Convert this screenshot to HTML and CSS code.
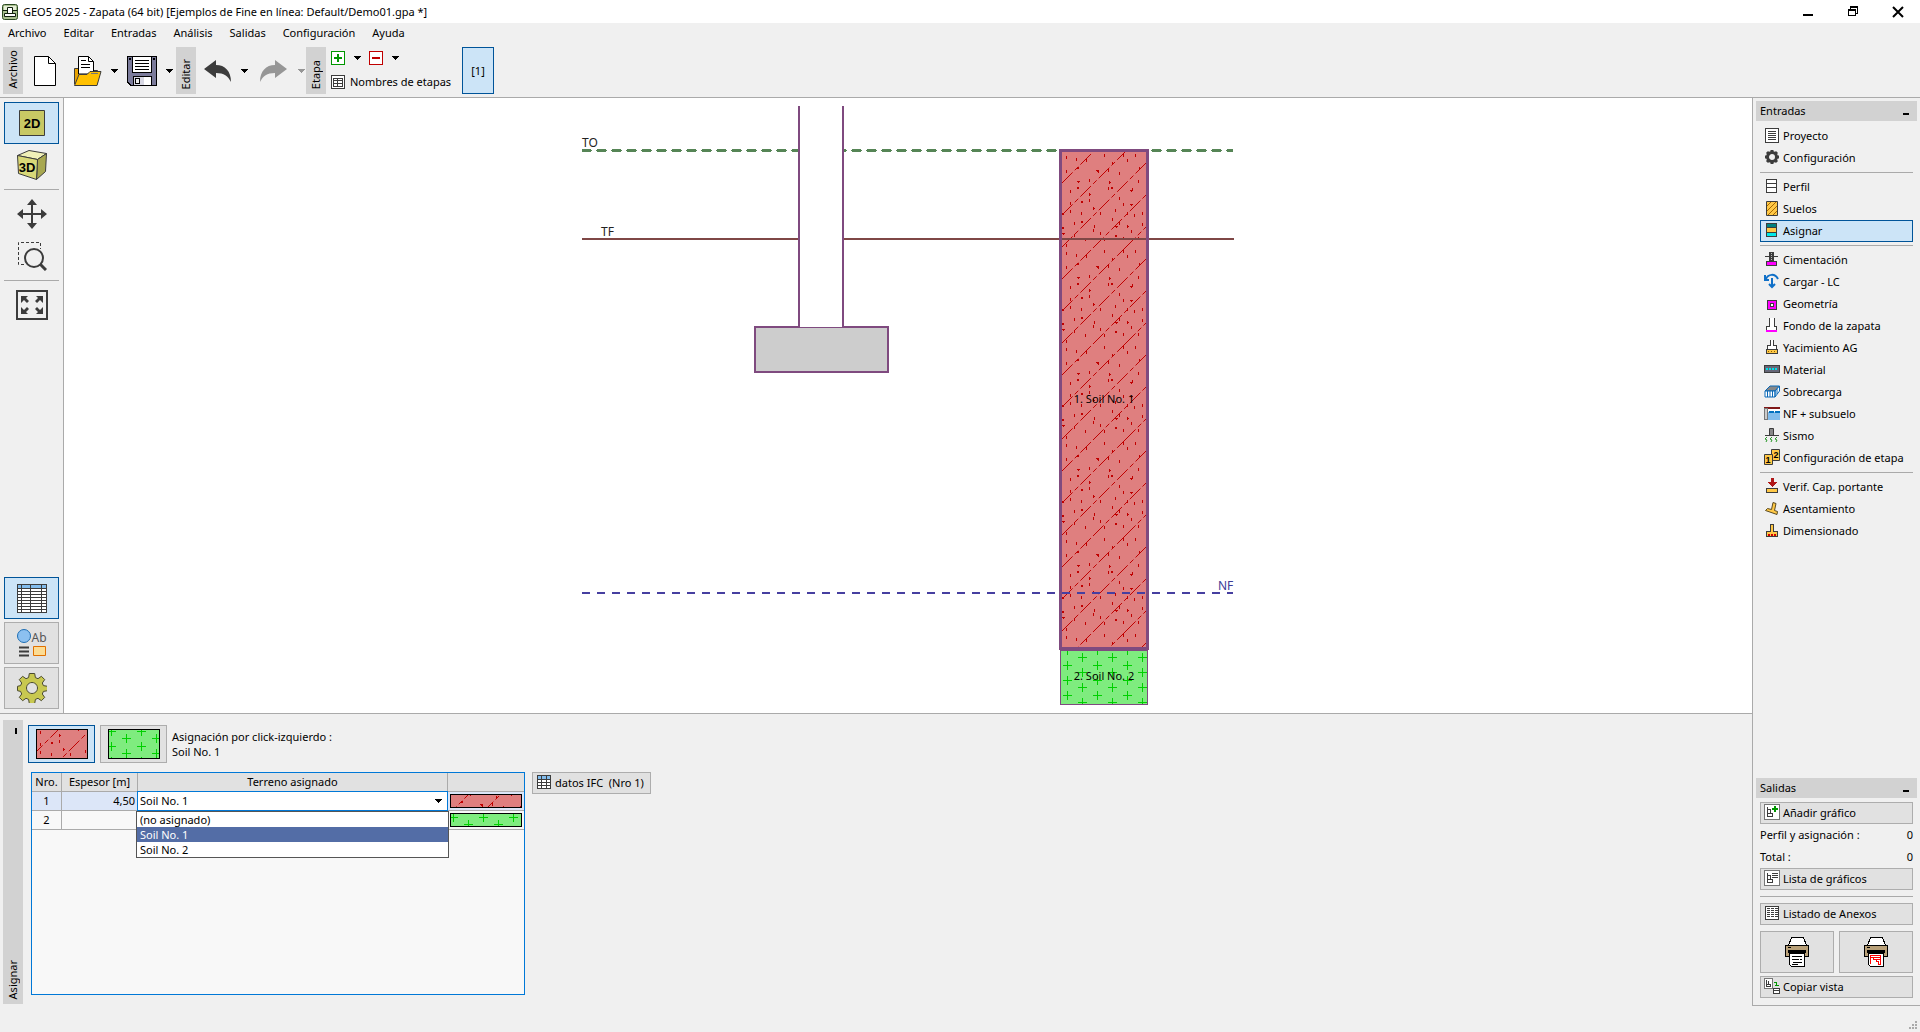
FILE: index.html
```html
<!DOCTYPE html>
<html lang="es">
<head>
<meta charset="utf-8">
<meta name="viewport" content="width=device-width, initial-scale=1">
<title>GEO5 2025 - Zapata</title>
<link rel="stylesheet" href="styles.css">
</head>
<body>
<svg class="defs" width="0" height="0" aria-hidden="true">
  <defs>
    <path id="caret" d="M0 0h7v1H6v1H5v1H4v1H3V3H2V2H1V1H0z"/>
    <pattern id="clay" x="1062" y="152" width="96" height="96" patternUnits="userSpaceOnUse">
      <rect width="96" height="96" fill="#df7f7f"/>
      <path d="M0 31 31 0M0 63 63 0M0 95 95 0M31 96 96 31M63 96 96 63" stroke="#c00000" stroke-dasharray="15 3 5 3" fill="none"/>
      <path d="M4 4v3M42 2v3M61 2v3M73 2v3M14 6v3M24 7v3M50 10v3M65 7v3M4 18v3M46 17v3M57 20v3M76 28v3M8 38v3M36 18v3M27 47v3M57 45v3M46 35v3M70 36v3M8 58v3M38 60v3M65 60v3M80 60v3M12 70v3M32 73v3M57 70v3M80 71v3M50 66v3M23 86v3M31 77v3M61 85v3M76 85v3M42 86v3M4 92v3M88 12v3M89 40v3M90 74v3M8 50v3M19 60v3M27 27v3M61 51v3M38 80v3M69 78v3M72 62v3M12 82v3M53 57v3M84 50v3M84 30v3" stroke="#c00000" transform="translate(.5)"/>
      <path d="M15 29h3v1h-1v1h-1v-1h-1zM34 18h3v1h-1v1h-1v-1h-1zM68 38h3v1h-1v1h-1v-1h-1zM68 52h3v1h-1v1h-1v-1h-1zM0 81h3v1H2v1H1v-1H0zM53 74h3v1h-1v1h-1v-1h-1zM27 41h1v1h1v1h-1v1h-1zM47 29h1v1h1v1h-1v1h-1zM77 15h1v1h1v1h-1v1h-1zM31 55h1v1h1v1h-1v1h-1zM65 73h1v1h1v1h-1v1h-1zM0 61h2v2H0z" fill="#c00000"/>
      <path d="m16 15 1 1-1 1-1-1zM16 35l1 1-1 1-1-1zM50 35l1 1-1 1-1-1zM20 49l1 1-1 1-1-1zM20 69l1 1-1 1-1-1zM54 83l1 1-1 1-1-1zM1 75l1 1-1 1-1-1z" stroke="#c00000" fill="none"/>
    </pattern>
    <pattern id="gravel" x="1067" y="650" width="30" height="15" patternUnits="userSpaceOnUse">
      <rect width="30" height="15" fill="#7fec7f"/>
      <path d="M-4 .5H5M26 .5H35M11 7.500H20M15.500 3V12M.5 0V5M.5 11V15M30.500 0V5" stroke="#00d000" fill="none"/>
    </pattern>
  </defs>
</svg>
<div class="app">
  <header class="titlebar">
    <svg class="app-icon" width="16" height="16" viewBox="0 0 16 16"><rect x=".5" y=".5" width="15" height="15" rx="2" fill="#a9c08f" stroke="#2c4a22"/><path d="M2 2h12v4H2z" fill="#e6efd8"/><path d="M5.500 9V3.500h5V9" fill="#fff" stroke="#10200c"/><path d="M1 6.500h4M11 6.500h4" stroke="#10200c"/><path d="M2.500 9.500h11v3h-11z" fill="#fff" stroke="#10200c"/></svg>
    <h1 class="title">GEO5 2025 - Zapata (64 bit) [Ejemplos de Fine en línea: Default/Demo01.gpa *]</h1>
    <div class="window-controls">
      <button type="button" aria-label="Minimizar"><svg width="12" height="12" viewBox="0 0 12 12" class="crisp"><path d="M1 8h10v2H1z"/></svg></button>
      <button type="button" aria-label="Restaurar"><svg width="12" height="12" viewBox="0 0 12 12" class="crisp"><path d="M1.500 4.500h7v5h-7zM3.500 4V1.500h7v6H9M1 3.500h8M3 .5h8" stroke="#000" fill="none"/></svg></button>
      <button type="button" aria-label="Cerrar"><svg width="12" height="12" viewBox="0 0 12 12"><path d="m1 1 10 10M11 1 1 11" stroke="#000" stroke-width="2"/></svg></button>
    </div>
  </header>
  <nav class="menubar">
    <button type="button">Archivo</button><button type="button">Editar</button><button type="button">Entradas</button><button type="button">Análisis</button><button type="button">Salidas</button><button type="button">Configuración</button><button type="button">Ayuda</button>
  </nav>

  <div class="toolbar">
    <div class="group-label"><span>Archivo</span></div>
    <button type="button" class="tool-wide" aria-label="Nuevo"><svg width="22" height="30" viewBox="0 0 22 30"><path d="M.5.500h14l7 7v22H.5z" fill="#fff" stroke="#000"/><path d="M14.500.500v7h7" fill="none" stroke="#000"/></svg></button>
    <button type="button" class="tool-mid" aria-label="Abrir"><svg width="29" height="30" viewBox="0 0 29 30"><path d="M1.500 28V12.500h7l2 2h14V28z" fill="#e8a200" stroke="#3c3c3c"/><path d="M5.500 18V.500h10l5 5V18z" fill="#fff" stroke="#000"/><path d="M15.500.500v5h5M8 4.500h5M8 8.500h9M8 11.500h9" stroke="#000" fill="none"/><path d="M1.500 29.500 6 18.500h8l3-3h11l-4 14z" fill="#ffc000" stroke="#3c3c3c"/><path d="M18 17.500h7" stroke="#777"/></svg></button>
    <button type="button" class="caret-wide" aria-label="Archivos recientes"><svg class="caret"><use href="#caret"/></svg></button>
    <button type="button" class="tool-mid" aria-label="Guardar"><svg width="30" height="30" viewBox="0 0 30 30" class="crisp"><path d="M.5.500h29v29H4L.5 26z" fill="#7b7b9b" stroke="#000"/><path d="M5.500.500h19v16h-19z" fill="#fff" stroke="#000"/><path d="M8 4.500h14M8 7.500h14M8 10.500h14M8 13.500h14" stroke="#000"/><path d="M2 2h2v2H2zM26 2h2v2h-2z"/><path d="M6.500 20.500h18v9h-18z" fill="#d8d8e4" stroke="#000"/><path d="M8.500 22.500h4v5h-4z" fill="#eee" stroke="#000"/><path d="M17 21h7v8h-7z" fill="#fff"/></svg></button>
    <button type="button" class="caret-wide" aria-label="Opciones de guardar"><svg class="caret"><use href="#caret"/></svg></button>
    <div class="group-label"><span>Editar</span></div>
    <button type="button" class="tool-wide" aria-label="Deshacer"><svg width="28" height="22" viewBox="0 0 28 22"><path d="M0 9 12 0v5c9 0 15 6 15 17-3-6-7-9-15-9v5z" fill="#3c3c3c"/></svg></button>
    <button type="button" class="caret-slim" aria-label="Historial"><svg class="caret"><use href="#caret"/></svg></button>
    <button type="button" class="tool-redo" aria-label="Rehacer"><svg width="28" height="22" viewBox="0 0 28 22"><path d="M28 9 16 0v5C7 5 1 11 1 22c3-6 7-9 15-9v5z" fill="#969696"/></svg></button>
    <button type="button" class="caret-slim dim" aria-label="Historial de rehacer"><svg class="caret"><use href="#caret"/></svg></button>
    <div class="group-label"><span>Etapa</span></div>
    <div class="stage-tools">
      <div class="stage-row">
        <button type="button" aria-label="Añadir etapa"><svg width="14" height="14" viewBox="0 0 14 14" class="crisp"><path d="M.5.500h13v13H.5z" fill="#fff" stroke="#009600"/><path d="M3 7h8M7 3v8" stroke="#009600" stroke-width="2"/></svg></button>
        <button type="button" class="caret-small" aria-label="Opciones de añadir"><svg class="caret"><use href="#caret"/></svg></button>
        <button type="button" aria-label="Eliminar etapa"><svg width="14" height="14" viewBox="0 0 14 14" class="crisp"><path d="M.5.500h13v13H.5z" fill="#fff" stroke="#c00000"/><path d="M3 7h8" stroke="#c00000" stroke-width="2"/></svg></button>
        <button type="button" class="caret-small" aria-label="Opciones de eliminar"><svg class="caret"><use href="#caret"/></svg></button>
      </div>
      <button type="button" class="stage-names"><svg width="14" height="14" viewBox="0 0 14 14" class="crisp"><path d="M.5.500h13v13H.5z" fill="#fff" stroke="#3c3c3c"/><path d="M2 3.500h10M2 5.500h10M2 8.500h10M2 11.500h10M2.500 3v9M6.500 3v9M11.500 3v9" stroke="#3c3c3c"/></svg>Nombres de etapas</button>
    </div>
    <button type="button" class="stage-btn selected">[1]</button>
  </div>

  <main class="main">
    <div class="work">
      <div class="workspace">
        <div class="rail">
          <div class="rail-group">
            <button type="button" class="rail-btn selected" aria-label="Vista 2D"><svg width="26" height="26" viewBox="0 0 26 26"><path d="M.5.500h25v25H.5z" fill="#c8c864" stroke="#3c3c3c"/><text x="13" y="18" text-anchor="middle" class="icon-text">2D</text></svg></button>
            <button type="button" class="rail-btn plain" aria-label="Vista 3D"><svg width="30" height="30" viewBox="0 0 30 30"><path d="M.5 5.500 12 .500l17.500 3-9 6z" fill="#f0f0b8" stroke="#3c3c3c"/><path d="m20.500 9.500 9-6-1 18-9 8z" fill="#a8a850" stroke="#3c3c3c"/><path d="m.5 5.500 20 4-1 20-18-6z" fill="#d8d878" stroke="#3c3c3c"/><text x="10" y="22" text-anchor="middle" class="icon-text">3D</text></svg></button>
            <hr>
            <button type="button" class="rail-btn plain" aria-label="Mover"><svg width="30" height="30" viewBox="0 0 30 30"><path d="M15 4v22M4 15h22" stroke="#3c3c3c" stroke-width="2"/><path d="m15 0 5 6H10zM15 30l5-6H10zM0 15l6-5v10zM30 15l-6-5v10z" fill="#3c3c3c"/></svg></button>
            <button type="button" class="rail-btn plain" aria-label="Ampliar región"><svg width="30" height="30" viewBox="0 0 30 30"><path d="M7 23.500H1.500v-22h22V8" fill="none" stroke="#3c3c3c" stroke-dasharray="3 2"/><circle cx="17" cy="17" r="9" fill="none" stroke="#3c3c3c" stroke-width="2"/><path d="m23 23 6 6" stroke="#3c3c3c" stroke-width="3"/></svg></button>
            <hr>
            <button type="button" class="rail-btn plain" aria-label="Ajustar"><svg width="32" height="30" viewBox="0 0 32 30"><path d="M1 1h30v28H1z" fill="none" stroke="#3c3c3c" stroke-width="2"/><path d="M5 6h7l-2 2 3 3-2 2-3-3-3 3zM27 6h-7l2 2-3 3 2 2 3-3 3 3zM5 24h7l-2-2 3-3-2-2-3 3-3-3zM27 24h-7l2-2-3-3 2-2 3 3 3-3z" fill="#3c3c3c"/></svg></button>
          </div>
          <div class="rail-bottom">
            <button type="button" class="rail-btn selected" aria-label="Tabla"><svg width="30" height="30" viewBox="0 0 30 30" class="crisp"><path d="M.5 1.500h29v28H.5z" fill="#fff"/><path d="M1 2h28v3H1z" fill="#82bcec"/><path d="M.5 1.500h29v28H.5zM4.500 1v28M13.500 1v28M24.500 1v28M0 5.500h30M0 8.500h30M0 11.500h30M0 14.500h30M0 17.500h30M0 20.500h30M0 23.500h30M0 26.500h30" fill="none" stroke="#3c3c3c"/></svg></button>
            <button type="button" class="rail-btn" aria-label="Estilos de dibujo"><svg width="30" height="30" viewBox="0 0 30 30"><circle cx="7" cy="8" r="6.500" fill="#8cc0f0" stroke="#1e6eb4"/><path d="M2 19.500h10M2 23.500h10M2 27.500h10" stroke="#3c3c3c" stroke-width="2"/><path d="M16.500 18.500h12v9h-12z" fill="#fcdc94" stroke="#e07000"/><text x="22" y="14" text-anchor="middle" class="icon-ab">Ab</text></svg></button>
            <button type="button" class="rail-btn" aria-label="Ajustes"><svg width="30" height="30" viewBox="0 0 30 30"><path fill-rule="evenodd" d="m12.300.500h5.400l.7 4.100 2.600 1.100 3.400-2.400 3.300 3.300-2.400 3.400 1.100 2.600 4.100.7v4.400l-4.100.7-1.100 2.600 2.400 3.400-3.300 3.300-3.400-2.400-2.600 1.100-.7 4.100h-5.400l-.7-4.100L9 25.300l-3.400 2.400-3.300-3.300L4.700 21l-1.100-2.600-3.100-.7v-4.400l3.100-.7L4.700 10 2.300 6.600l3.300-3.300L9 5.700l2.600-1.100zM15 9.500a5.500 5.500 0 1 0 .01 0z" fill="#c8c850" stroke="#4a4a30"/></svg></button>
          </div>
        </div>
        <div class="canvas">
          <svg viewBox="64 98 1688 615" preserveAspectRatio="xMidYMid meet" role="img" aria-label="Perfil de la zapata">
            <g class="crisp">
              <path d="M582 150.500H1233" stroke="#568556" stroke-width="3" stroke-dasharray="9 6"/>
              <path d="M582 150.500H1233" stroke="#568556" stroke-dasharray="11 4" stroke-dashoffset="1"/>
              <path d="M800 106h42v222h-42z" fill="#fff"/>
              <path d="M755 327h133v45H755z" fill="#cdcdcd" stroke="#7f4a7f" stroke-width="2"/>
              <path d="M800 326h42v1h-42z" fill="#fff"/>
              <path d="M799 106v221M843 106v221" stroke="#7f4a7f" stroke-width="2"/>
              <path d="M1060.500 650.500h87v54h-87z" fill="url(#gravel)" stroke="#7f4a7f"/>
              <path d="M1060.500 150.500h87v498h-87z" fill="url(#clay)" stroke="#7f4a7f" stroke-width="3"/>
              <path d="M582 239H798M844 239H1059M1149 239H1234M1062 239H1146" stroke="#7f4746" stroke-width="2"/>
              <path d="M582 593H1233" stroke="#463fa0" stroke-width="2" stroke-dasharray="8 7"/>
              <path d="M1060.500 236v6M1147.500 236v6M1060.500 590v6M1147.500 590v6" stroke="#7f4a7f" stroke-width="3"/>
            </g>
            <g class="levels">
              <text x="582" y="147">TO</text>
              <text x="601" y="236">TF</text>
              <text x="1218" y="590" class="water">NF</text>
            </g>
            <g class="soils">
              <text x="1104" y="403" text-anchor="middle">1. Soil No. 1</text>
              <text x="1104" y="680" text-anchor="middle">2. Soil No. 2</text>
            </g>
          </svg>
        </div>
      </div>

      <section class="lower">
        <div class="panel-label"><i></i><span>Asignar</span></div>
        <div class="lower-body">
          <div class="soil-row">
            <button type="button" class="soil-btn selected" aria-label="Soil No. 1"><svg width="52" height="30" viewBox="1066 188 52 30" class="crisp"><path d="M1066.500 188.500h51v29h-51z" fill="url(#clay)" stroke="#000"/></svg></button>
            <button type="button" class="soil-btn" aria-label="Soil No. 2"><svg width="52" height="30" viewBox="1064 648 52 30" class="crisp"><path d="M1064.500 648.500h51v29h-51z" fill="url(#gravel)" stroke="#000"/></svg></button>
            <p class="hint">Asignación por click-izquierdo :<br>Soil No. 1</p>
          </div>
          <div class="table-row">
            <div class="table-box">
              <table>
                <thead><tr><th class="c-num">Nro.</th><th class="c-thick">Espesor [m]</th><th>Terreno asignado</th><th class="c-pat" aria-label="Trama"></th></tr></thead>
                <tbody>
                  <tr class="active"><td class="num">1</td><td class="thick">4,50</td>
                    <td class="soil"><select aria-label="Terreno asignado"><option>(no asignado)</option><option selected>Soil No. 1</option><option>Soil No. 2</option></select><svg class="caret select-caret"><use href="#caret"/></svg>
                      <ul class="popup"><li>(no asignado)</li><li class="current">Soil No. 1</li><li>Soil No. 2</li></ul></td>
                    <td class="pat"><svg width="72" height="14" viewBox="1066 160 72 14" class="crisp"><path d="M1066.500 160.500h71v13h-71z" fill="url(#clay)" stroke="#000"/></svg></td></tr>
                  <tr><td class="num">2</td><td class="thick"></td><td></td>
                    <td class="pat"><svg width="72" height="14" viewBox="1064 646 72 14" class="crisp"><path d="M1064.500 646.500h71v13h-71z" fill="url(#gravel)" stroke="#000"/></svg></td></tr>
                </tbody>
              </table>
            </div>
            <button type="button" class="ifc"><svg width="14" height="14" viewBox="0 0 14 14" class="crisp"><path d="M.5.500h13v13H.5z" fill="#fff"/><path d="M1 1h12v4H1z" fill="#82bcec"/><path d="M.5.500h13v13H.5zM4.500 0v14M9.500 0v14M0 4.500h14M0 7.500h14M0 10.500h14" fill="none" stroke="#3c3c3c"/></svg>datos IFC&nbsp; (Nro 1)</button>
          </div>
        </div>
      </section>
    </div>

    <aside class="side">
      <section>
        <h2>Entradas<i></i></h2>
        <div class="items">
          <button type="button" class="item"><svg class="ic crisp"><path d="M1.500 1.500h13v14h-13z" fill="#fff" stroke="#3c3c3c"/><path d="M4 4.500h8M4 6.500h8M4 8.500h8M4 10.500h8M4 12.500h8" stroke="#3c3c3c"/></svg>Proyecto</button>
          <button type="button" class="item"><svg class="ic"><circle cx="8" cy="8" r="4.500" fill="none" stroke="#3c3c3c" stroke-width="3"/><path d="M8 1v3M8 12v3M1 8h3M12 8h3M3 3l2 2M11 11l2 2M13 3l-2 2M5 11l-2 2" stroke="#3c3c3c" stroke-width="3"/></svg>Configuración</button>
          <hr>
          <button type="button" class="item"><svg class="ic crisp"><path d="M2.500 1.500h10v13h-10z" fill="#fff" stroke="#3c3c3c"/><path d="M2 5.500h11M2 9.500h11" stroke="#3c3c3c"/></svg>Perfil</button>
          <button type="button" class="item"><svg class="ic"><path d="M2.500 1.500h11v14h-11z" fill="#ffc846" stroke="#3c3c3c"/><path d="m3 6 4-4M3 11l9-9M4 15l9-9M9 15l4-4" stroke="#a86800"/></svg>Suelos</button>
          <button type="button" class="item selected"><svg class="ic crisp"><path d="M2.500 1.500h10v13h-10z" fill="#ffc846" stroke="#3c3c3c"/><path d="M3 2h9v3H3z" fill="#008080"/><path d="M3 11h9v3H3z" fill="#00e8e8"/><path d="M2 5.500h11M2 10.500h11" stroke="#3c3c3c"/></svg>Asignar</button>
          <hr>
          <button type="button" class="item"><svg class="ic crisp"><path d="M2.500 10.500h10v4h-10z" fill="#f0f" stroke="#3c3c3c"/><path d="M5 1h5v9H5z" fill="#3c3c3c"/><path d="M1 5.500h4M10 5.500h4" stroke="#3c3c3c"/><path d="M7.500 2v8" stroke="#bbb" stroke-dasharray="1 1"/></svg>Cimentación</button>
          <button type="button" class="item"><svg class="ic"><path d="M8 5v9M5 11l3 3 3-3M2 6c2-5 9-6 12 0M1 2v5h4" fill="none" stroke="#1070c8" stroke-width="2"/></svg>Cargar - LC</button>
          <button type="button" class="item"><svg class="ic crisp"><path d="M3.500 5.500h9v9h-9z" fill="#f0f" stroke="#3c3c3c"/><path d="M6.500 8.500h3v3h-3z" fill="#fff" stroke="#3c3c3c"/></svg>Geometría</button>
          <button type="button" class="item"><svg class="ic crisp"><path d="M5.500 1v8h-3v4h10V9h-2V1" fill="#fff" stroke="#3c3c3c"/><path d="M2 13h11v2H2z" fill="#f0f"/></svg>Fondo de la zapata</button>
          <button type="button" class="item"><svg class="ic crisp"><path d="M6.500 1v5h-3v4h9V6h-3V1" fill="#fff" stroke="#3c3c3c"/><path d="M2.500 10.500h11v4h-11z" fill="#ffc846" stroke="#3c3c3c"/><path d="M4 12.500h9" stroke="#8a6000" stroke-dasharray="1 2"/></svg>Yacimiento AG</button>
          <button type="button" class="item"><svg class="ic crisp"><path d="M.5 4.500h15v7H.5z" fill="#667" stroke="#3c3c3c"/><path d="M2 8h12" stroke="#00e0e8" stroke-width="2" stroke-dasharray="2 1"/></svg>Material</button>
          <button type="button" class="item"><svg class="ic"><path d="m1 8 5-5h9.500L11 8z" fill="#888" stroke="#0868b8"/><path d="M1 8h10v6H1zM11 8l4.500-5v5L11 14z" fill="#fff" stroke="#0868b8"/><path d="M3.500 8v6M6 8v6M8.500 8v6M13 6v5" stroke="#0868b8"/></svg>Sobrecarga</button>
          <button type="button" class="item"><svg class="ic crisp"><path d="M4 4h12v11H4z" fill="#82bcec"/><path d="M4 4h12v3H4z" fill="#fff"/><path d="M0 2h16v2H0z" fill="#801818"/><path d="M.5 3.500h3v11h-3z" fill="#ccc" stroke="#777"/><path d="M5 7h5M11 7h5" stroke="#0070c0" stroke-width="2"/></svg>NF + subsuelo</button>
          <button type="button" class="item"><svg class="ic"><path d="M5.500 1.500h4v7h-4z" fill="#888" stroke="#3c3c3c"/><path d="M1 8.500h14" stroke="#3c3c3c"/><path d="m3 10-2 2 2 1-1 2M8 10l-2 2 2 1-1 2M13 10l-2 2 2 1-1 2" fill="none" stroke="#289828"/></svg>Sismo</button>
          <button type="button" class="item"><svg class="ic"><path d="M7.500.500h8v11h-8z" fill="#ffc846" stroke="#3c3c3c"/><path d="M.5 5.500h8v10h-8z" fill="#ffc846" stroke="#3c3c3c"/><text x="4" y="14" text-anchor="middle" class="icon-num">1</text><text x="12" y="9" text-anchor="middle" class="icon-num">2</text></svg>Configuración de etapa</button>
          <hr>
          <button type="button" class="item"><svg class="ic crisp"><path d="M2.500 10.500h11v4h-11z" fill="#ffc846" stroke="#3c3c3c"/><path d="M7 0h3v4h3l-4 5h-1L4 4h3z" fill="#b01818"/></svg>Verif. Cap. portante</button>
          <button type="button" class="item"><svg class="ic"><path d="m1.500 10.500 2-2 4 1 1.500-7 3 1-1.500 7 3 1-.5 3z" fill="#ffc846" stroke="#5a4a20"/></svg>Asentamiento</button>
          <button type="button" class="item"><svg class="ic crisp"><path d="M6.500 2v7h-4v5.500h11V9h-4V2z" fill="#ffc846" stroke="#3c3c3c"/><path d="M4 13h9" stroke="#d00000" stroke-width="2" stroke-dasharray="2 1"/></svg>Dimensionado</button>
        </div>
      </section>
      <section>
        <h2>Salidas<i></i></h2>
        <div class="outputs">
          <button type="button" class="out"><svg class="ic crisp"><path d="M.5.500h15v15H.5z" fill="#fff" stroke="#777"/><path d="M3.500 3v9h5V9h-5M6.500 9V5h-3" fill="none" stroke="#3c3c3c"/><path d="M8 5h6M11 2v6" stroke="#009600" stroke-width="2"/></svg>Añadir gráfico</button>
          <p>Perfil y asignación :<b>0</b></p>
          <p>Total :<b>0</b></p>
          <button type="button" class="out"><svg class="ic crisp"><path d="M.5.500h15v15H.5z" fill="#fff" stroke="#777"/><path d="M3.500 3v9h5V9h-5M6.500 9V5h-3M8 3.500h6M8 5.500h6M8 7.500h6" fill="none" stroke="#3c3c3c"/></svg>Lista de gráficos</button>
          <hr>
          <button type="button" class="out"><svg class="ic crisp"><path d="M1.500 1.500h13v13h-13z" fill="#fff" stroke="#3c3c3c"/><path d="M3 3.500h11M3 5.500h11M3 7.500h11M3 9.500h11M3 11.500h11" stroke="#3c3c3c" stroke-dasharray="3 1"/></svg>Listado de Anexos</button>
          <div class="prints">
            <button type="button" aria-label="Imprimir informe"><svg width="24" height="30" viewBox="0 0 24 30" class="crisp"><path d="M3.500 8.500 6.500.500h12l3 8z" fill="#fff" stroke="#000"/><path d="M.5 8.500h23v11H.5z" fill="#b8a078" stroke="#000"/><path d="M3 10.500h3" stroke="#000"/><path d="M3 13h18v3H3z"/><path d="M4.500 16.500h15v13h-13l-2-2z" fill="#fff" stroke="#000"/><path d="M7 19.500h10M7 22.500h7M15 22.500h2M8 25.500h9M7 27.500h6" stroke="#000"/></svg></button>
            <button type="button" aria-label="Imprimir vista"><svg width="24" height="30" viewBox="0 0 24 30" class="crisp"><path d="M3.500 8.500 6.500.500h12l3 8z" fill="#fff" stroke="#000"/><path d="M.5 8.500h23v11H.5z" fill="#b8a078" stroke="#000"/><path d="M3 10.500h3" stroke="#000"/><path d="M3 13h18v3H3z"/><path d="M4.500 16.500h15v13h-13l-2-2z" fill="#fff" stroke="#000"/><path d="M6.500 27V18.500h10v9h-2v-3h-2v-2h-3v-2h-3M9 20.500h7M12 22.500h4" fill="none" stroke="#f00"/></svg></button>
          </div>
          <button type="button" class="out"><svg class="ic crisp"><path d="M.5.500h8v10h-8z" fill="#fff" stroke="#777"/><path d="M2.500 2v6h4V6h-4M4.500 6V3" fill="none" stroke="#3c3c3c"/><path d="M10 4.500h2.500V8M11 7.500h4" fill="none" stroke="#009600"/><path d="M9.500 10.500h6v5h-6zM9 12.500h7" fill="#fff" stroke="#3c3c3c"/></svg>Copiar vista</button>
        </div>
      </section>
    </aside>
  </main>
  <footer class="status"><svg width="9" height="9" viewBox="0 0 9 9" class="crisp"><path d="M6 0h2v2H6zM3 3h2v2H3zM6 3h2v2H6zM0 6h2v2H0zM3 6h2v2H3zM6 6h2v2H6z" fill="#aaa"/></svg></footer>
</div>
</body>
</html>
```
FILE: styles.css
```css
* { box-sizing: border-box; }

body {
  margin: 0;
  background: #f0f0f0;
  color: #000;
  font: 11px/15px "Noto Sans", "Open Sans", sans-serif;
}

button {
  margin: 0;
  padding: 0;
  border: 0;
  background: none;
  color: inherit;
  font: inherit;
  display: flex;
  align-items: center;
  justify-content: center;
}

h1, h2, p, ul { margin: 0; padding: 0; font: inherit; }
svg { display: block; flex: none; }
hr { border: 0; border-top: 1px solid #aaa; margin: 3px 0; }
.defs { position: absolute; }
.crisp { shape-rendering: crispEdges; }
.caret { width: 7px; height: 4px; fill: #000; shape-rendering: crispEdges; }
.dim .caret { fill: #969696; }

.icon-text { font: bold 13px "Liberation Sans", Arial, sans-serif; }
.icon-ab { font: 12px "Noto Sans", sans-serif; fill: #555; }
.icon-num { font: bold 9px "Liberation Sans", Arial, sans-serif; }

.app { min-height: 100vh; display: flex; flex-direction: column; }

.titlebar { height: 23px; flex: none; background: #fff; display: flex; align-items: center; padding-left: 2px; gap: 5px; }
.title { flex: 1; }
.window-controls { display: flex; }
.window-controls button { width: 45px; height: 23px; }

.menubar { height: 21px; flex: none; display: flex; gap: 17px; padding: 0 8px 2px; }

.toolbar { height: 54px; flex: none; display: flex; padding: 3px; border-bottom: 1px solid #aaa; }
.group-label { width: 20px; background: #d2d2d2; display: flex; align-items: flex-end; justify-content: center; padding: 0 2px 5px 0; }
.group-label span, .panel-label span { writing-mode: vertical-rl; transform: rotate(180deg); }
.tool-wide { width: 43px; }
.tool-mid { width: 42px; }
.tool-redo { width: 47px; }
.caret-wide { width: 13px; }
.caret-slim { width: 10px; }
.stage-tools { width: 136px; padding-left: 5px; display: flex; flex-direction: column; }
.stage-row { display: flex; height: 22px; align-items: center; }
.caret-small { width: 24px; height: 14px; }
.stage-names { height: 25px; gap: 5px; justify-content: flex-start; white-space: nowrap; }
.stage-btn { width: 32px; }
.selected, .rail-btn.selected, .soil-btn.selected { background: #cce4f7; border: 1px solid #005499; }

.main { flex: 1; display: flex; }
.work { flex: 1; min-width: 0; display: flex; flex-direction: column; }
.workspace { flex: 1; display: flex; border-bottom: 1px solid #aaa; }

.rail { width: 64px; flex: none; border-right: 1px solid #aaa; padding: 4px; display: flex; flex-direction: column; justify-content: space-between; }
.rail-bottom { display: flex; flex-direction: column; gap: 3px; }
.rail-btn { width: 55px; height: 42px; border: 1px solid #adadad; background: #e1e1e1; }
.rail-btn.plain { border-color: transparent; background: none; }

.canvas { flex: 1; min-width: 0; background: #fff; display: flex; }
.canvas svg { width: 100%; height: 100%; min-height: 0; }
.levels { font-size: 12px; fill: #222; }
.levels .water { fill: #3c3c96; }
.soils { font-size: 11px; fill: #000; }

.lower { flex: none; min-height: 292px; display: flex; gap: 5px; padding: 6px 3px 2px; }
.panel-label { width: 20px; background: #d2d2d2; display: flex; flex-direction: column; align-items: center; justify-content: space-between; padding: 8px 2px 5px 0; }
.panel-label i { width: 2px; height: 6px; background: #000; margin-left: 7px; }
.lower-body { flex: 1; padding-top: 5px; }
.soil-row { display: flex; gap: 5px; align-items: center; margin-bottom: 9px; }
.soil-btn { width: 67px; height: 38px; border: 1px solid #adadad; background: #e1e1e1; }

.table-row { display: flex; align-items: flex-start; gap: 7px; padding-left: 3px; }
.table-box { width: 494px; height: 223px; border: 1px solid #0078d7; background: #f8f8f8; }
table { border-collapse: separate; border-spacing: 0; table-layout: fixed; width: 100%; }
th, td { height: 19px; padding: 0; border: solid #aaa; border-width: 0 1px 1px 0; font-weight: normal; line-height: 18px; }
th:last-child, td:last-child { border-right: 0; }
th { background: #e1e1e1; text-align: center; }
.c-num { width: 30px; }
.c-thick { width: 76px; }
.c-pat { width: 76px; }
.active td { background: #dce6f8; }
.num { text-align: center; }
.thick { text-align: right; padding-right: 2px; }
.pat svg { margin: 0 auto; }
.soil { position: relative; }
select { display: block; appearance: none; width: 100%; height: 18px; margin: 0; padding: 0 2px; border: 0; border-radius: 0; outline: 1px solid #0078d7; background: #fff; color: #000; font: inherit; }
.select-caret { position: absolute; right: 5px; top: 7px; }
.popup { position: absolute; left: -2px; right: -2px; top: 19px; z-index: 1; list-style: none; border: 1px solid #555; background: #fff; line-height: 15px; }
.popup li { padding-left: 3px; }
.popup .current { background: #536da6; color: #fff; }

.ifc { height: 22px; padding: 0 6px 2px 4px; gap: 4px; border: 1px solid #adadad; background: #e1e1e1; white-space: nowrap; }

.side { width: 168px; flex: none; border: solid #aaa; border-width: 0 0 1px 1px; padding: 3px 3px 7px; display: flex; flex-direction: column; justify-content: space-between; }
.side h2 { height: 20px; background: #d2d2d2; padding: 0 8px 2px 4px; display: flex; align-items: center; justify-content: space-between; }
.side h2 i { width: 6px; height: 2px; background: #000; margin-top: 8px; }
.items, .outputs { padding: 4px 4px 0; }
.item, .out { width: 100%; height: 22px; border: 1px solid transparent; padding: 0 0 2px 3px; gap: 3px; justify-content: flex-start; white-space: nowrap; }
.ic { width: 16px; height: 16px; }
.item.selected { border-color: #005499; }
.outputs { display: flex; flex-direction: column; }
.out { border-color: #adadad; background: #e1e1e1; }
.outputs p { height: 22px; line-height: 22px; display: flex; justify-content: space-between; }
.outputs p b { font-weight: normal; }
.outputs hr { width: 100%; margin: 6px 0; }
.prints { display: flex; gap: 5px; margin: 6px 0 3px; }
.prints button { flex: 1; height: 42px; border: 1px solid #adadad; background: #e1e1e1; }

.status { height: 26px; flex: none; display: flex; align-items: flex-end; justify-content: flex-end; padding: 0 2px 2px 0; }
```
